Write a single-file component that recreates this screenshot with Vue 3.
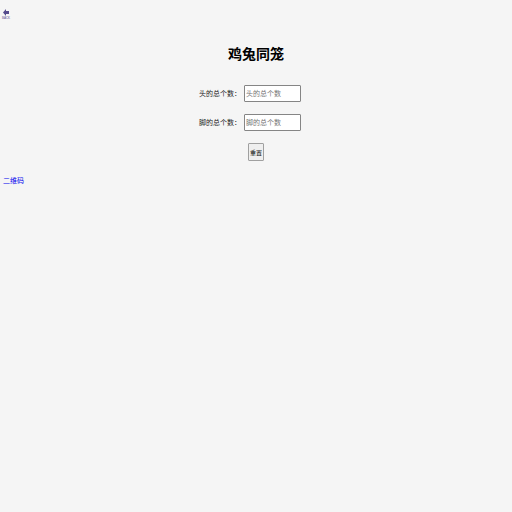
<script setup>
import { ref } from 'vue'

const heads = ref('')
const feet = ref('')

function reset() {
  heads.value = ''
  feet.value = ''
}
</script>

<template>
  <main class="page">
    <a class="back" href="#" aria-label="BACK">
      <svg class="arrow" viewBox="0 0 6 7" aria-hidden="true">
        <path d="M0 3.5 L3 0 V2 H6 V5 H3 V7 Z" />
      </svg>
      <span class="back-text">BACK</span>
    </a>
    <h1 class="title">鸡兔同笼</h1>
    <form class="form" @submit.prevent>
      <div class="row">
        <label for="heads">头的总个数：</label>
        <input id="heads" v-model="heads" type="text" placeholder="头的总个数" />
      </div>
      <div class="row">
        <label for="feet">脚的总个数：</label>
        <input id="feet" v-model="feet" type="text" placeholder="脚的总个数" />
      </div>
      <button class="reset" type="button" @click="reset">重置</button>
    </form>
    <a class="qr" href="#">二维码</a>
  </main>
</template>

<style>
body {
  background: #f5f5f5;
}
</style>

<style scoped>
.page {
  display: flex;
  flex-direction: column;
  padding: 9px 3px;
  font-family: "Liberation Sans", "Noto Sans CJK SC", sans-serif;
  font-size: 7px;
  color: #222;
}

.back {
  display: flex;
  flex-direction: column;
  align-self: flex-start;
  align-items: center;
  width: 6px;
  height: 12px;
  color: #5c5291;
  text-decoration: none;
}

.arrow {
  width: 6px;
  height: 7px;
  fill: #554a8c;
}

.back-text {
  font-size: 3px;
  line-height: 5px;
}

.title {
  margin: 18px 0 16px;
  font-size: 14px;
  line-height: 30px;
  text-align: center;
  color: #000;
}

.form {
  display: flex;
  flex-direction: column;
  align-items: center;
}

.row {
  display: flex;
  justify-content: flex-end;
  align-items: center;
  gap: 3px;
  width: 90px;
  margin-bottom: 12px;
}

label {
  flex: none;
  line-height: 12px;
  white-space: nowrap;
}

input {
  flex: none;
  box-sizing: border-box;
  width: 57px;
  height: 17px;
  padding: 0 1px;
  border: 1px solid #858585;
  border-radius: 1px;
  background: #fff;
  font: inherit;
  color: #222;
}

input::placeholder {
  color: #757575;
}

.reset {
  box-sizing: border-box;
  width: 16px;
  height: 18px;
  padding: 0;
  border: 1px solid #a0a0a0;
  border-radius: 1px;
  background: #efefef;
  font: inherit;
  font-size: 6px;
  color: #000;
}

.qr {
  align-self: flex-start;
  margin-top: 14px;
  line-height: 12px;
  color: #00e;
  text-decoration: none;
}
</style>
